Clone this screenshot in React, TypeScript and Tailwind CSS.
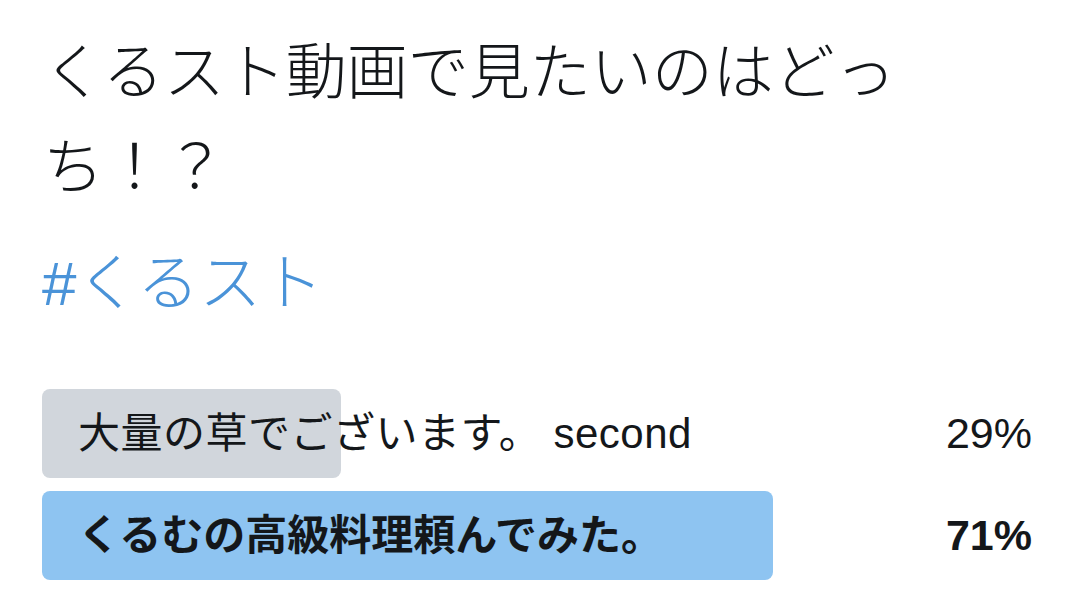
const options = [
  { label: '大量の草でございます。 second', pct: 29, width: 299, winner: false },
  { label: 'くるむの高級料理頼んでみた。', pct: 71, width: 731, winner: true },
]

const App = () => {
  return (
    <div
      className="h-[607px] w-[1080px] overflow-hidden bg-white text-[#14171a]"
      style={{ fontFamily: '"Liberation Sans", "Noto Sans CJK JP", sans-serif' }}
    >
      {/* Tweet body */}
      <div className="pl-[43px] pt-[26px]">
        <p className="w-[900px] text-[61px] font-light leading-[95px]">
          くるスト動画で見たいのはどっち！？
        </p>
        <p className="mt-[20px] -ml-[1px] text-[62px] font-light leading-[95px] text-[#4a93d8]">
          #くるスト
        </p>
      </div>

      {/* Poll */}
      <div className="mt-[58px] flex flex-col gap-[13px] pl-[42px] pr-[48px]">
        {options.map((o) => (
          <div key={o.label} className="relative flex h-[89px] items-center">
            <div
              className={
                o.winner
                  ? 'absolute inset-y-0 left-0 rounded-[8px] bg-[#8ec4f1]'
                  : 'absolute inset-y-0 left-0 rounded-[8px] bg-[#d1d6dc]'
              }
              style={{ width: o.width }}
            />
            <span
              className={
                o.winner
                  ? 'relative pl-[36px] text-[42px] font-bold'
                  : 'relative pl-[36px] text-[42px] tracking-[0.5px]'
              }
            >
              {o.label}
            </span>
            <span
              className={
                o.winner
                  ? 'relative ml-auto text-[43px] font-bold'
                  : 'relative ml-auto text-[43px]'
              }
            >
              {o.pct}%
            </span>
          </div>
        ))}
      </div>
    </div>
  )
}

export default App
